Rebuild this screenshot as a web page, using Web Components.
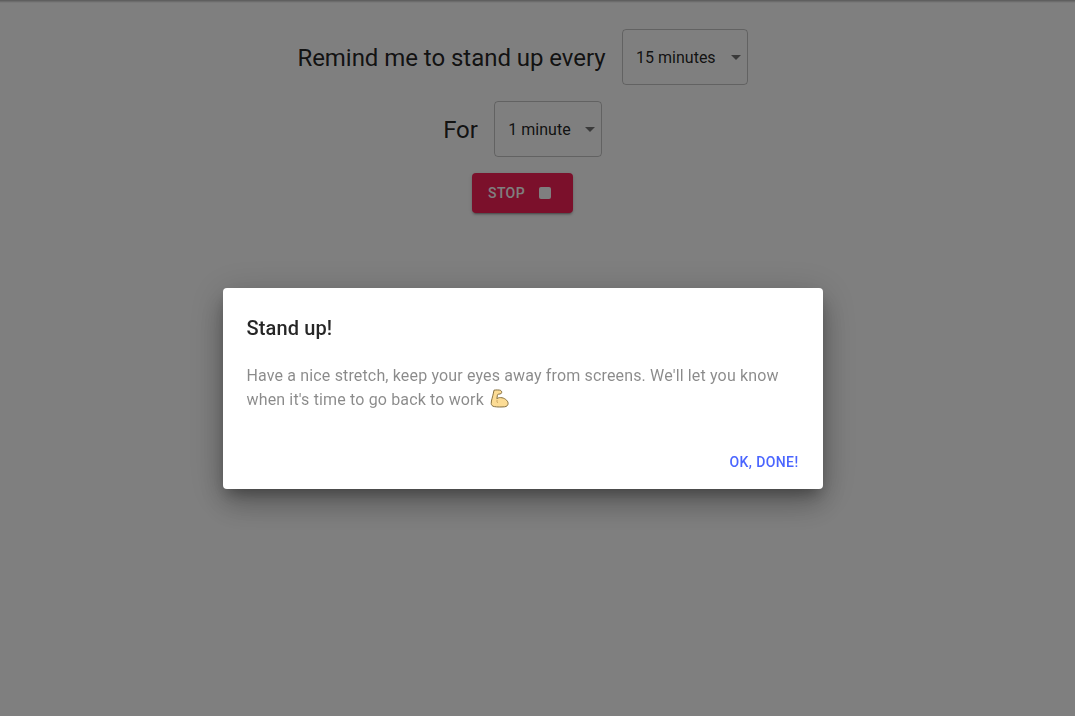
<!DOCTYPE html>
<html>
<head>
<meta charset="utf-8">
<title>Stand up</title>
<style>
  html, body { margin: 0; height: 100%; background: #fff; font-family: Roboto, "Liberation Sans", sans-serif; }
</style>
</head>
<body>
<reminder-app>
  <form-row>
    <span>Remind me to stand up every</span>
    <time-select value="15 minutes" width="126"></time-select>
  </form-row>
  <form-row>
    <span>For</span>
    <time-select value="1 minute" width="108"></time-select>
  </form-row>
  <stop-button>Stop</stop-button>
</reminder-app>
<alert-dialog heading="Stand up!" action="Ok, done!">
  Have a nice stretch, keep your eyes away from screens. We'll let you know when it's time to go back to work
  <svg slot="emoji" width="20" height="20" viewBox="0 0 20 20" style="vertical-align:-4px;margin-left:2px">
    <path d="M4 1.200C6 .8 9.500.8 10.800 1.500c.9.500 1.200 2 .6 2.800-.6.700-2 .8-3 .9-.6.100-.9.400-1 1l-.5 3.600c1-.9 2.300-1.300 3.700-1.200 2 .1 3.500.6 5 1.800 1.500 1.100 2.500 2.400 2.500 4 0 1.900-1.400 3.200-3.400 3.400-3.500.3-7.500.3-10.400-.2-1.800-.3-3-1.400-3.100-3-.1-1.700.4-3.500.9-5.300.5-1.800 1-3.600 1.900-8.100z" fill="#fcdc95" stroke="#86703f" stroke-width="1" stroke-linejoin="round"/>
    <path d="M7 11.500c-.2.800 0 1.600.6 2.200" fill="none" stroke="#c9a25e" stroke-width="1" stroke-linecap="round"/>
  </svg>
</alert-dialog>

<script>
class ReminderApp extends HTMLElement {
  constructor() {
    super();
    this.attachShadow({mode: "open"}).innerHTML = `
      <style>
        :host {
          display: flex;
          flex-direction: column;
          align-items: center;
          gap: 16px;
          box-sizing: border-box;
          min-height: 100vh;
          padding: 29px 30px 0 0;
          background: linear-gradient(rgba(0,0,0,.3), rgba(0,0,0,0) 3px);
        }
      </style>
      <slot></slot>
    `;
  }
}

class FormRow extends HTMLElement {
  constructor() {
    super();
    this.attachShadow({mode: "open"}).innerHTML = `
      <style>
        :host {
          display: flex;
          align-items: center;
          gap: 16px;
          font-size: 24px;
          color: rgba(0,0,0,.87);
        }
        ::slotted(span) {
          padding-top: 2px;
          letter-spacing: -.04px;
        }
      </style>
      <slot></slot>
    `;
  }
}

class TimeSelect extends HTMLElement {
  constructor() {
    super();
    this.attachShadow({mode: "open"}).innerHTML = `
      <style>
        :host {
          display: flex;
          align-items: center;
          justify-content: space-between;
          box-sizing: border-box;
          width: ${this.getAttribute("width")}px;
          height: 56px;
          padding: 0 6px 0 13.500px;
          border: 1px solid rgba(0,0,0,.23);
          border-radius: 4px;
          font-size: 16px;
          color: rgba(0,0,0,.87);
        }
        i {
          width: 0;
          height: 0;
          border-left: 5px solid transparent;
          border-right: 5px solid transparent;
          border-top: 5px solid rgba(0,0,0,.54);
        }
      </style>
      <span>${this.getAttribute("value")}</span><i></i>
    `;
  }
}

class StopButton extends HTMLElement {
  constructor() {
    super();
    this.attachShadow({mode: "open"}).innerHTML = `
      <style>
        :host {
          display: inline-flex;
          align-items: center;
          box-sizing: border-box;
          height: 40px;
          width: 101px;
          padding: 0 16px;
          gap: 14px;
          border-radius: 4px;
          background: #f72057;
          color: #fff;
          font-size: 14px;
          font-weight: 500;
          letter-spacing: .4px;
          text-transform: uppercase;
          box-shadow: 0 3px 1px -2px rgba(0,0,0,.2), 0 2px 2px 0 rgba(0,0,0,.14), 0 1px 5px 0 rgba(0,0,0,.12);
        }
        i {
          width: 12px;
          height: 12px;
          border-radius: 2px;
          background: #fff;
        }
      </style>
      <slot></slot><i></i>
    `;
  }
}

class AlertDialog extends HTMLElement {
  constructor() {
    super();
    this.attachShadow({mode: "open"}).innerHTML = `
      <style>
        :host {
          position: fixed;
          inset: 0;
          display: flex;
          align-items: center;
          justify-content: center;
          box-sizing: border-box;
          padding: 61px 30px 0 0;
          background: rgba(0,0,0,.5);
        }
        .paper {
          box-sizing: border-box;
          width: 600px;
          height: 201px;
          display: flex;
          flex-direction: column;
          border-radius: 4px;
          background: #fff;
          box-shadow: 0 8px 14px -4px rgba(0,0,0,.3), 0 16px 30px 0 rgba(0,0,0,.2), 0 6px 36px 4px rgba(0,0,0,.15);
        }
        h2 {
          margin: 0;
          padding: 24px 24px 0;
          font-size: 20px;
          font-weight: 500;
          line-height: 32px;
          letter-spacing: .12px;
          color: rgba(0,0,0,.85);
        }
        p {
          margin: 0;
          flex: 1;
          padding: 20px 24px 0;
          font-size: 16px;
          line-height: 24px;
          letter-spacing: .15px;
          color: rgba(0,0,0,.46);
        }
        footer {
          display: flex;
          justify-content: flex-end;
          padding: 8px;
        }
        button {
          border: 0;
          background: none;
          font: 500 14px/24.5px Roboto, sans-serif;
          letter-spacing: .4px;
          text-transform: uppercase;
          color: #4a65ff;
          padding: 5px 16px 7px;
        }
      </style>
      <div class="paper">
        <h2>${this.getAttribute("heading")}</h2>
        <p><slot></slot> <slot name="emoji"></slot></p>
        <footer><button>${this.getAttribute("action")}</button></footer>
      </div>
    `;
  }
}

customElements.define('reminder-app', ReminderApp);
customElements.define('form-row', FormRow);
customElements.define('time-select', TimeSelect);
customElements.define('stop-button', StopButton);
customElements.define('alert-dialog', AlertDialog);
</script>
</body>
</html>
